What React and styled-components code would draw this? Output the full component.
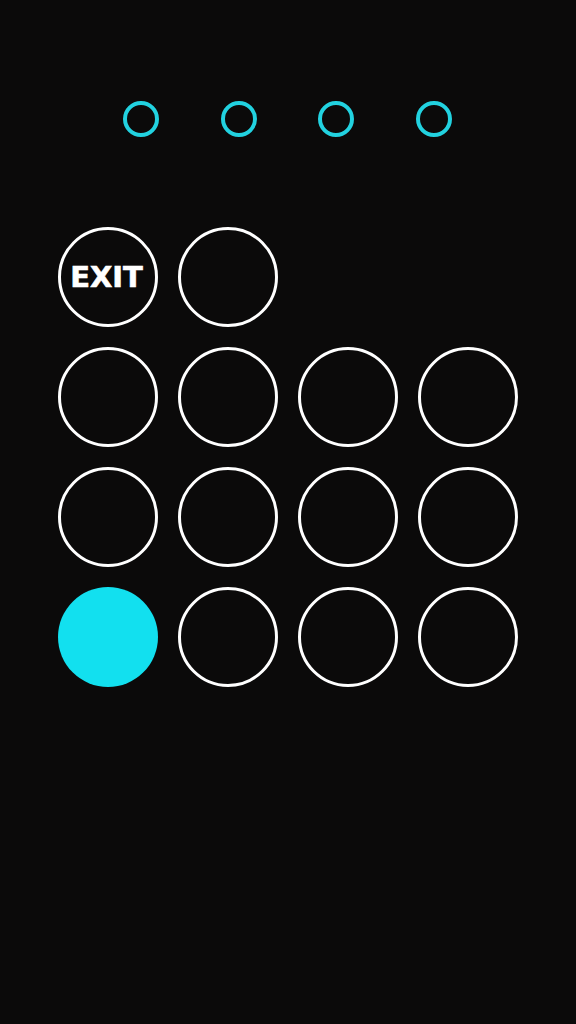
import React from "react";
import styled, { createGlobalStyle } from "styled-components";

const Global = createGlobalStyle`
  html, body { margin: 0; padding: 0; background: #0b0a0a; }
  #root { min-height: 1024px; }
`;

const Screen = styled.div`
  width: 576px;
  height: 1024px;
  background: #0b0a0a;
  display: flex;
  flex-direction: column;
  align-items: center;
  box-sizing: border-box;
  padding-top: 101px;
`;

const Dots = styled.div`
  display: flex;
  gap: 61.7px;
  margin-left: -1px;
`;

const Dot = styled.div`
  width: 36px;
  height: 36px;
  box-sizing: border-box;
  border-radius: 50%;
  border: 4px solid #22d2e0;
`;

const Pad = styled.div`
  margin-top: 90px;
  display: grid;
  grid-template-columns: repeat(4, 100px);
  grid-auto-rows: 100px;
  gap: 20px;
`;

const Key = styled.button`
  width: 100px;
  height: 100px;
  box-sizing: border-box;
  border-radius: 50%;
  padding: 0 3px 0 0;
  border: ${(p) => (p.$active ? "none" : "3.8px solid #ffffff")};
  background: ${(p) => (p.$active ? "#12e0ef" : "transparent")};
  color: #ffffff;
  font-family: "DejaVu Sans", "Open Sans", sans-serif;
  font-weight: 700;
  font-size: 29px;
  letter-spacing: 0px;
  -webkit-text-stroke: 0.6px #ffffff;
  display: flex;
  align-items: center;
  justify-content: center;
`;

const Empty = styled.div``;

export default function App() {
  return (
    <>
      <Global />
      <Screen>
        <Dots>
          <Dot />
          <Dot />
          <Dot />
          <Dot />
        </Dots>
        <Pad>
          <Key>EXIT</Key>
          <Key />
          <Empty />
          <Empty />
          <Key />
          <Key />
          <Key />
          <Key />
          <Key />
          <Key />
          <Key />
          <Key />
          <Key $active />
          <Key />
          <Key />
          <Key />
        </Pad>
      </Screen>
    </>
  );
}
